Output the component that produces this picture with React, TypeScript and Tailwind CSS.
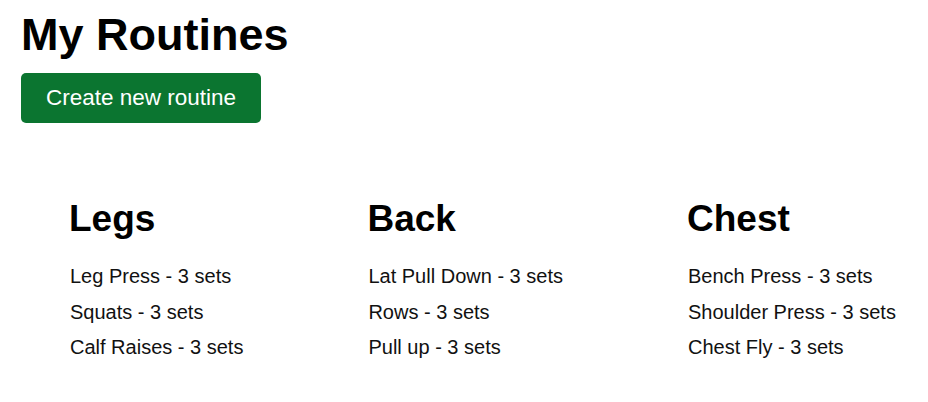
import type React from "react";

interface Routine {
  id: string;
  name: string;
  exercises: { name: string; sets: number }[];
}

const routines: Routine[] = [
  {
    id: "1",
    name: "Legs",
    exercises: [
      { name: "Leg Press", sets: 3 },
      { name: "Squats", sets: 3 },
      { name: "Calf Raises", sets: 3 },
    ],
  },
  {
    id: "2",
    name: "Back",
    exercises: [
      { name: "Lat Pull Down", sets: 3 },
      { name: "Rows", sets: 3 },
      { name: "Pull up", sets: 3 },
    ],
  },
  {
    id: "3",
    name: "Chest",
    exercises: [
      { name: "Bench Press", sets: 3 },
      { name: "Shoulder Press", sets: 3 },
      { name: "Chest Fly", sets: 3 },
    ],
  },
];

const App: React.FC = () => {
  return (
    <div className="min-h-[402px] bg-white text-black font-['Liberation_Sans',Arial,sans-serif]">
      <div className="px-[21px]">
        <h1 className="mt-[9px] text-[45px] leading-[52px] font-bold">My Routines</h1>
        <button className="mt-[12px] h-[50px] w-[240px] rounded-[5px] bg-[#0b7530] text-[22.5px] text-white">
          Create new routine
        </button>
      </div>

      {/* Routine columns */}
      <div className="mt-[74px] flex gap-[124px] pl-[69px]">
        {routines.map((routine) => (
          <div key={routine.id}>
            <h2 className="text-[37px] leading-[44px] font-bold">{routine.name}</h2>
            <ul className="mt-[18px] pl-[1px]">
              {routine.exercises.map((exercise) => (
                <li key={exercise.name} className="text-[20px] leading-[35.5px] text-[#111]">
                  {exercise.name} - {exercise.sets} sets
                </li>
              ))}
            </ul>
          </div>
        ))}
      </div>
    </div>
  );
};

export default App;
